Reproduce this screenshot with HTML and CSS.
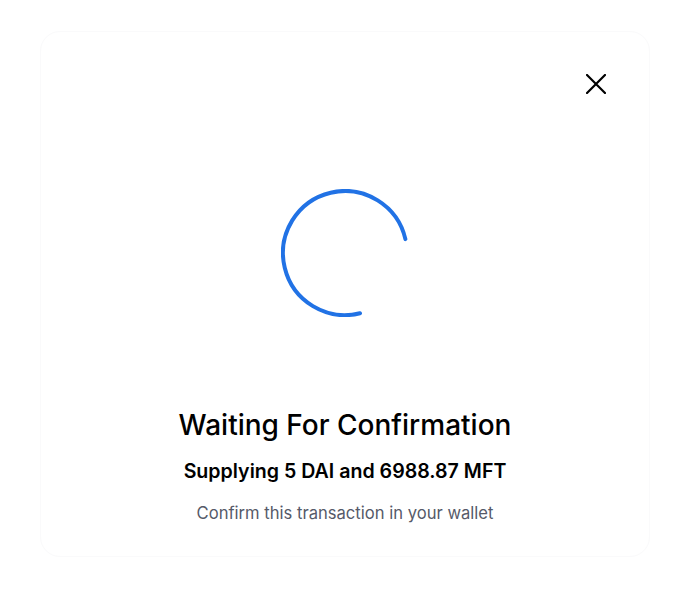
FILE: index.html
```html
<!DOCTYPE html>
<html lang="en">
<head>
  <title>Waiting For Confirmation</title>
  <meta charset="utf-8">
  <meta name="viewport" content="width=device-width, initial-scale=1">
  <link rel="stylesheet" href="styles.css">
</head>
<body>
  <div class="modal">
    <div class="modal-header">
      <button class="close" type="button" aria-label="Close">
        <svg width="20" height="20" viewBox="0 0 20 20">
          <path d="M1 1L19 19M19 1L1 19" stroke="#000000" stroke-width="2.2" stroke-linecap="square"/>
        </svg>
      </button>
    </div>
    <div class="spinner">
      <svg width="128" height="128" viewBox="0 0 128 128">
        <path d="M79 124.2A62 62 0 1 1 124.4 50.1" fill="none" stroke="#2172E5" stroke-width="4" stroke-linecap="round"/>
      </svg>
    </div>
    <div class="content">
      <h2 class="title">Waiting For Confirmation</h2>
      <p class="summary">Supplying 5 DAI and 6988.87 MFT</p>
      <p class="hint">Confirm this transaction in your wallet</p>
    </div>
  </div>
</body>
</html>
```

FILE: styles.css
```css
*, *::before, *::after {
  margin: 0;
  box-sizing: border-box;
}

body {
  min-height: 100vh;
  padding: 31px 50px 36px 40px;
  background-color: #FFFFFF;
  color: #000000;
  font-family: "Inter", sans-serif;
}

.modal {
  display: flex;
  flex-direction: column;
  width: 610px;
  height: 526px;
  padding: 42px 43px 0;
  border: 1px solid #FAFAFB;
  border-radius: 20px;
  background-color: #FFFFFF;
}

.modal-header {
  display: flex;
  justify-content: flex-end;
}

.close {
  display: flex;
  padding: 0;
  border: none;
  background: none;
  cursor: pointer;
}

.spinner {
  display: flex;
  justify-content: center;
  margin-top: 95px;
}

.content {
  display: flex;
  flex-direction: column;
  align-items: center;
  margin-top: 92px;
  text-align: center;
}

.title {
  font-size: 28px;
  font-weight: 500;
  line-height: 1.2;
}

.summary {
  margin-top: 17px;
  font-size: 19.6px;
  font-weight: 600;
  line-height: 1.2;
}

.hint {
  margin-top: 21px;
  color: #565A69;
  font-size: 16.6px;
  line-height: 1.2;
}
```
